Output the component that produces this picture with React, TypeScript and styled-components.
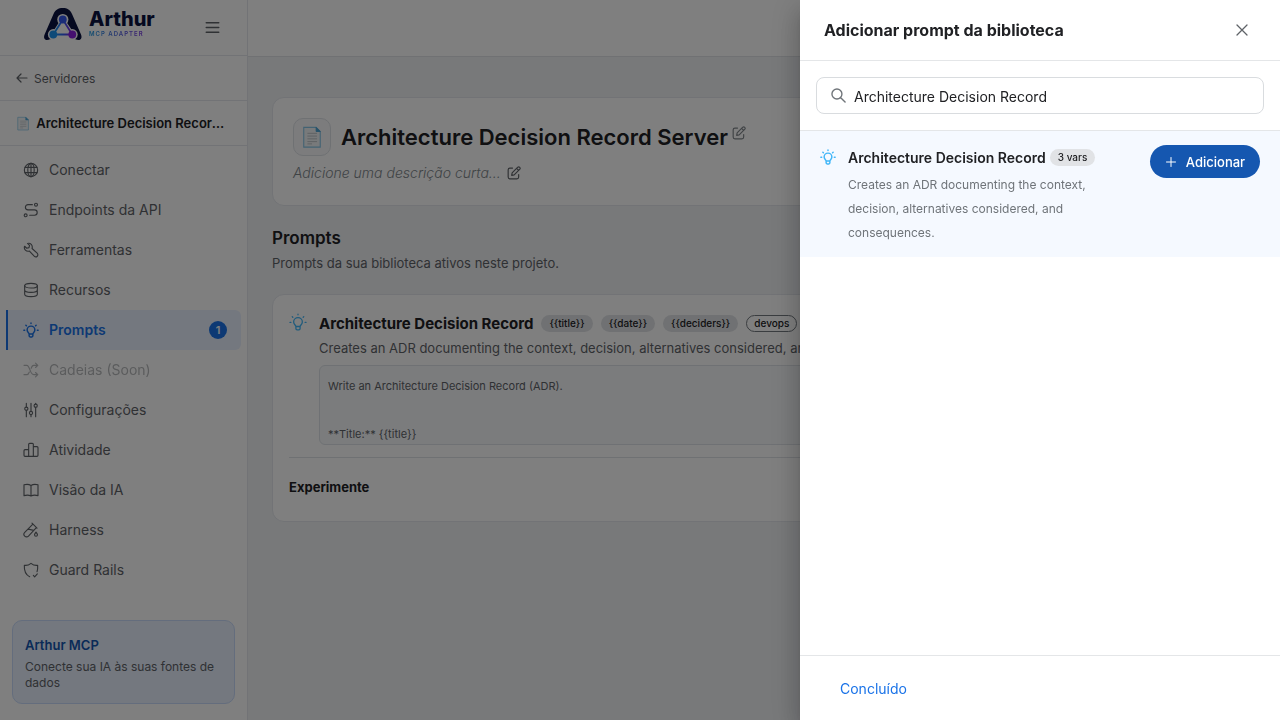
import React from 'react';
import styled, { createGlobalStyle, css } from 'styled-components';

const GlobalStyle = createGlobalStyle`
  *, *::before, *::after { box-sizing: border-box; }
  body {
    margin: 0;
    font-family: Inter, 'Liberation Sans', sans-serif;
    color: #202124;
    background: #f0f2f5;
  }
  h1, h2, h3, p, ul { margin: 0; padding: 0; }
  button, input { font-family: inherit; }
`;

/* ---------- icons ---------- */

const Stroke = styled.svg<{ $size?: number; $weight?: number }>`
  width: ${p => p.$size ?? 16}px;
  height: ${p => p.$size ?? 16}px;
  flex: none;
  fill: none;
  stroke: currentColor;
  stroke-width: ${p => p.$weight ?? 1.7};
  stroke-linecap: round;
  stroke-linejoin: round;
`;

type IconProps = { size?: number; weight?: number };

const makeIcon = (shape: React.ReactNode) => ({ size, weight }: IconProps) => (
  <Stroke viewBox="0 0 24 24" $size={size} $weight={weight} aria-hidden="true">{shape}</Stroke>
);

const GlobeIcon = makeIcon(<>
  <circle cx="12" cy="12" r="10" />
  <ellipse cx="12" cy="12" rx="4.8" ry="10" />
  <path d="M12 2v20M3 8h18M3 16h18" />
</>);
const RouteIcon = makeIcon(<>
  <circle cx="19.500" cy="4" r="2.200" />
  <circle cx="4" cy="20" r="2.200" />
  <path d="M14 4H7.500a3.900 3.900 0 0 0 0 7.800h9.800a4 4 0 0 1 0 8H10" />
</>);
const WrenchIcon = makeIcon(
  <path d="M6.800 2.200 9.800 5.200 9 8.400 5.600 9.400 2.400 6.400C.8 10.800 4.800 15 9.600 13.600l7.200 7.600c1.400 1.400 3.400 1.400 4.600.2s1.200-3.200-.2-4.600L13.600 9.800C15 5 11.200.8 6.800 2.200z" />
);
const DatabaseIcon = makeIcon(<>
  <ellipse cx="12" cy="5.500" rx="9.500" ry="3.500" />
  <path d="M2.500 5.500v13c0 2 4.200 3.500 9.500 3.500s9.500-1.500 9.500-3.500v-13M2.500 12c0 2 4.200 3.500 9.500 3.500s9.500-1.500 9.500-3.500" />
</>);
const BulbIcon = makeIcon(<>
  <path d="M9.200 18c0-1.600-3-2.800-3-6a5.800 5.800 0 0 1 11.600 0c0 3.200-3 4.400-3 6zM9.200 18v2.800c0 .9.700 1.600 1.600 1.600h2.400c.9 0 1.600-.7 1.600-1.600V18" />
  <path d="M12 1.500v.9M1.300 12.500h1.200M21.500 12.500h1.200M4.300 4.800l.8.800M19.700 4.800l-.8.800" />
</>);
const ShuffleIcon = makeIcon(
  <path d="M1.500 5h4.300c4.700 0 4.400 14 10.200 14h6M1.500 19h4.300c1.800 0 2.900-1.800 3.700-4M12.200 9.500C13 7 14 5 16 5h6M18.800 1.800 22.200 5l-3.400 3.200M18.800 15.800l3.400 3.200-3.400 3.200" />
);
const SlidersIcon = makeIcon(<>
  <path d="M5 2v5.500M5 12.500V22M12 2v12M12 19v3M19 2v1M19 8v14" />
  <circle cx="5" cy="10" r="2.400" /><circle cx="12" cy="16.500" r="2.400" /><circle cx="19" cy="5.500" r="2.400" />
</>);
const ChartIcon = makeIcon(
  <path d="M8.500 21.500V3.500a1.500 1.500 0 0 1 1.500-1.500h4a1.500 1.500 0 0 1 1.500 1.500v18M8.500 11.500H3A1.500 1.500 0 0 0 1.500 13v7A1.500 1.500 0 0 0 3 21.500h18a1.500 1.500 0 0 0 1.500-1.500V8.500A1.500 1.500 0 0 0 21 7h-5.500" />
);
const BookIcon = makeIcon(
  <path d="M12 5.200C9 3.200 5 3.200 1.500 4.200V20.500c3.500-1 7.500-1 10.500.5 3-1.500 7-1.500 10.500-.5V4.200C19 3.200 15 3.200 12 5.200zM12 5.200V21" />
);
const TubeIcon = makeIcon(<>
  <path d="M13.500 1.800 21 9.200M14.800 3.200 2.600 15.600a3.900 3.900 0 0 0 5.600 5.600L20 8.500M7.600 10.700l8.600 1.800" />
  <path d="M19.500 15.200c-1.400 1.800-2.200 2.900-2.200 4a2.200 2.200 0 0 0 4.400 0c0-1.100-.8-2.200-2.200-4z" />
</>);
const ShieldIcon = makeIcon(
  <path d="M10 22C4 19.500 1.500 15 2 5c4 .6 7-.5 10-3 3 2.500 6 3.600 10 3 .2 4 0 7-.9 9.500M15.500 20l2 2.200 4-4.400" />
);
const BackIcon = makeIcon(<path d="M22 12H3M10 4l-8 8 8 8" />);
const MenuIcon = makeIcon(<path d="M2 4.500h20M2 12h20M2 19.500h20" />);
const EditIcon = makeIcon(
  <path d="M9.500 3.500H5a3 3 0 0 0-3 3V19a3 3 0 0 0 3 3h12a3 3 0 0 0 3-3v-4.500M8 16l.8-4.300L18.500 2a2.500 2.500 0 0 1 3.500 3.500L12.300 15.200zM16.500 4l3.500 3.500" />
);
const SearchIcon = makeIcon(<><circle cx="9.500" cy="9.500" r="8" /><path d="m15.500 15.500 7 7" /></>);
const CloseIcon = makeIcon(<path d="M2 2l20 20M22 2 2 22" />);
const PlusIcon = makeIcon(<path d="M12 3v18M3 12h18" />);

const DocumentIcon = ({ size }: { size: number }) => (
  <svg width={size} height={size} viewBox="0 0 24 24" aria-hidden="true">
    <path d="M3 1.500h13.500L21 6v17H3z" fill="#f1f4f6" stroke="#86c5e6" strokeWidth="1.200" />
    <path d="M16.500 1.500V6H21z" fill="#4aa3d4" stroke="#4aa3d4" strokeWidth="1" />
    <path d="M7 8h10.500M7 11h10.500M7 14h10.500M7 17h10.500M7 19.500h5" stroke="#b9c0c5" strokeWidth="1" />
  </svg>
);

/* ---------- sidebar ---------- */

const Shell = styled.div`
  display: flex;
  height: 100vh;
  overflow: hidden;
`;

const Sidebar = styled.aside`
  display: flex;
  flex-direction: column;
  flex: none;
  width: 248px;
  background: #fff;
  border-right: 1px solid #e4e7ec;
`;

const Brand = styled.div`
  display: flex;
  align-items: center;
  height: 56px;
  padding: 0 27px 0 43px;
  border-bottom: 1px solid #e4e7ec;
`;

const Logo = styled.a`
  display: flex;
  gap: 6px;
  height: 34px;
  margin-bottom: 8px;
  color: #0b1340;
  text-decoration: none;
`;

const Wordmark = styled.span`
  display: flex;
  flex-direction: column;
  padding-top: 1px;
  font-size: 20px;
  font-weight: 800;
  line-height: 22px;
`;

const Tagline = styled.span`
  width: max-content;
  font-size: 6px;
  font-weight: 600;
  line-height: 8px;
  letter-spacing: 1px;
  background: linear-gradient(90deg, #1a9ae0, #7a35e0);
  background-clip: text;
  color: transparent;
`;

const IconButton = styled.button`
  display: grid;
  place-items: center;
  padding: 0;
  border: 0;
  background: none;
  color: #5f6368;
  cursor: pointer;
`;

const MenuButton = styled(IconButton)`
  margin-left: auto;
`;

const SideRow = styled.div`
  display: flex;
  align-items: center;
  gap: 6px;
  height: 45px;
  padding: 0 20px 0 16px;
  border-bottom: 1px solid #e4e7ec;
`;

const BackLink = styled.a`
  display: flex;
  align-items: center;
  gap: 6px;
  color: #5f6368;
  font-size: 12px;
  text-decoration: none;
`;

const ProjectName = styled.strong`
  overflow: hidden;
  font-size: 13px;
  font-weight: 600;
  text-overflow: ellipsis;
  white-space: nowrap;
`;

const Nav = styled.nav`
  display: flex;
  flex-direction: column;
  flex: 1;
  padding: 4px 6px;
`;

const NavItem = styled.a<{ $active?: boolean; $disabled?: boolean }>`
  display: flex;
  align-items: center;
  gap: 10px;
  height: 40px;
  padding: 0 14px 1px 15px;
  border-left: 2px solid transparent;
  color: #5f6368;
  font-size: 14px;
  text-decoration: none;
  ${p => p.$active && css`
    border-left-color: #1a73e8;
    border-radius: 0 6px 6px 0;
    background: #e8f0fe;
    color: #1a73e8;
    font-weight: 600;
  `}
  ${p => p.$disabled && css`opacity: 0.45;`}
`;

const Count = styled.span`
  display: grid;
  place-items: center;
  width: 18px;
  height: 18px;
  margin-left: auto;
  border-radius: 50%;
  background: #1a73e8;
  color: #fff;
  font-size: 11px;
  font-weight: 600;
`;

const Promo = styled.section`
  margin: 0 12px 16px;
  padding: 15px 12px 12px;
  border: 1px solid #c9dbfa;
  border-radius: 10px;
  background: #e8f0fe;
`;

const PromoTitle = styled.h3`
  margin-bottom: 5px;
  color: #1557b0;
  font-size: 13px;
  font-weight: 600;
  line-height: 18px;
`;

const PromoText = styled.p`
  color: #5f6368;
  font-size: 12px;
  line-height: 16px;
`;

/* ---------- page ---------- */

const Page = styled.div`
  flex: 1;
  min-width: 0;
`;

const TopBar = styled.header`
  height: 57px;
  border-bottom: 1px solid #e0e3e7;
  background: #fff;
`;

const Content = styled.main`
  padding: 40px 24px;
`;

const Card = styled.section`
  border: 1px solid #e4e7ec;
  border-radius: 12px;
  background: #fff;
`;

const ServerCard = styled(Card)`
  padding: 20px;
`;

const TitleRow = styled.div`
  display: flex;
  align-items: center;
  gap: 10px;
`;

const DocTile = styled.span`
  display: grid;
  place-items: center;
  width: 38px;
  height: 38px;
  border: 1px solid #dfe2e7;
  border-radius: 10px;
  background: #f8f9fa;
`;

const PageTitle = styled.h1`
  font-size: 22px;
  font-weight: 600;
  line-height: 30px;
  white-space: nowrap;
`;

const TitleGroup = styled.div`
  display: flex;
  gap: 4px;
  align-items: flex-start;
`;

const EditTitle = styled(IconButton)`
  padding-top: 4px;
  color: #80868b;
`;

const Summary = styled.p`
  display: flex;
  align-items: center;
  gap: 6px;
  margin-top: 5px;
  color: #80868b;
  font-size: 14px;
  font-style: italic;
  font-weight: 300;
  line-height: 24px;
`;

const SectionTitle = styled.h2`
  margin-top: 20px;
  font-size: 17px;
  font-weight: 600;
  line-height: 24px;
`;

const SectionNote = styled.p`
  margin: 3px 0 21px;
  color: #5f6368;
  font-size: 13px;
  line-height: 20px;
`;

const PromptCard = styled(Card)`
  padding: 16px;
`;

const PromptTop = styled.div`
  display: flex;
  gap: 12px;
  padding-bottom: 12px;
  border-bottom: 1px solid #dfe2e7;
`;

const BulbMark = styled.span<{ $top: number }>`
  display: flex;
  padding-top: ${p => p.$top}px;
  color: #40b6f8;
`;

const PromptBody = styled.div`
  flex: 1;
  min-width: 0;
`;

const PromptHead = styled.div`
  display: flex;
  align-items: center;
  gap: 8px;
  height: 24px;
`;

const PromptName = styled.h3`
  font-size: 15px;
  font-weight: 700;
  white-space: nowrap;
`;

const Chip = styled.span<{ $outlined?: boolean }>`
  height: 17px;
  padding: 0 8px;
  border-radius: 9px;
  background: #e1e3e6;
  font-size: 10px;
  font-weight: 500;
  line-height: 17px;
  white-space: nowrap;
  ${p => p.$outlined && css`
    padding: 0 7px;
    border: 1px solid #747a80;
    background: none;
    line-height: 15px;
  `}
`;

const PromptNote = styled.p`
  overflow: hidden;
  color: #5f6368;
  font-size: 13px;
  line-height: 26px;
  white-space: nowrap;
`;

const Preview = styled.pre`
  height: 80px;
  margin: 4px 0 0;
  padding: 8px;
  overflow: hidden;
  border: 1px solid #dfe3e8;
  border-radius: 6px;
  background: #f6f8fb;
  color: #5f6368;
  font-family: inherit;
  font-size: 11px;
  line-height: 24px;
`;

const TryTitle = styled.h3`
  padding: 20px 0 9px;
  font-size: 13px;
  font-weight: 700;
  line-height: 18px;
`;

/* ---------- drawer ---------- */

const Backdrop = styled.div`
  position: fixed;
  inset: 0;
  background: rgba(0, 0, 0, 0.5);
`;

const Drawer = styled.div`
  position: fixed;
  inset: 0 0 0 auto;
  display: flex;
  flex-direction: column;
  width: 480px;
  max-width: 100%;
  background: #fff;
  box-shadow: 0 8px 10px -5px rgba(0, 0, 0, 0.2), 0 16px 24px 2px rgba(0, 0, 0, 0.14),
    0 6px 30px 5px rgba(0, 0, 0, 0.12);
`;

const DrawerHead = styled.header`
  display: flex;
  align-items: center;
  justify-content: space-between;
  height: 61px;
  padding: 0 32px 0 24px;
  border-bottom: 1px solid #e4e6e8;
`;

const DrawerTitle = styled.h2`
  font-size: 16px;
  font-weight: 700;
`;

const SearchArea = styled.div`
  padding: 16px;
  border-bottom: 1px solid #e4e6e8;
`;

const SearchBox = styled.label`
  display: flex;
  align-items: center;
  gap: 8px;
  height: 37px;
  padding: 0 14px;
  border: 1px solid #d9dcdf;
  border-radius: 8px;
  color: #6f7479;
`;

const SearchInput = styled.input`
  flex: 1;
  min-width: 0;
  padding: 2px 0 0;
  border: 0;
  outline: 0;
  background: none;
  color: #202124;
  font-size: 14px;
`;

const Results = styled.ul`
  flex: 1;
  list-style: none;
`;

const Result = styled.li`
  display: flex;
  gap: 12px;
  padding: 12px 20px;
  background: #f5f9ff;
`;

const ResultBody = styled.div`
  width: 260px;
`;

const ResultHead = styled.div`
  display: flex;
  align-items: center;
  gap: 4px;
  height: 30px;
  padding-bottom: 2px;
`;

const ResultName = styled.h3`
  font-size: 14px;
  font-weight: 600;
  white-space: nowrap;
`;

const ResultNote = styled.p`
  color: #6f7479;
  font-size: 12px;
  line-height: 24px;
`;

const AddButton = styled.button`
  display: flex;
  align-items: center;
  justify-content: center;
  gap: 9px;
  width: 110px;
  height: 33px;
  margin: 2px 0 0 auto;
  padding: 0;
  border: 0;
  border-radius: 17px;
  background: #1557b0;
  color: #fff;
  font-size: 13px;
  font-weight: 500;
  cursor: pointer;
`;

const DrawerFoot = styled.footer`
  display: flex;
  align-items: center;
  height: 65px;
  padding: 0 24px;
  border-top: 1px solid #e4e6e8;
`;

const DoneButton = styled.button`
  padding: 8px 16px;
  border: 0;
  background: none;
  color: #1a73e8;
  font-size: 14px;
  font-weight: 400;
  cursor: pointer;
`;

const navItems: { label: string; Icon: React.FC<IconProps>; active?: boolean; disabled?: boolean; count?: number }[] = [
  { label: 'Conectar', Icon: GlobeIcon },
  { label: 'Endpoints da API', Icon: RouteIcon },
  { label: 'Ferramentas', Icon: WrenchIcon },
  { label: 'Recursos', Icon: DatabaseIcon },
  { label: 'Prompts', Icon: BulbIcon, active: true, count: 1 },
  { label: 'Cadeias (Soon)', Icon: ShuffleIcon, disabled: true },
  { label: 'Configurações', Icon: SlidersIcon },
  { label: 'Atividade', Icon: ChartIcon },
  { label: 'Visão da IA', Icon: BookIcon },
  { label: 'Harness', Icon: TubeIcon },
  { label: 'Guard Rails', Icon: ShieldIcon },
];

const LogoMark = () => (
  <svg width="40" height="34" viewBox="0 0 40 34" aria-hidden="true">
    <defs>
      <linearGradient id="mark" x1="0" y1="0" x2="1" y2="0">
        <stop offset="0" stopColor="#16a0f0" />
        <stop offset="0.5" stopColor="#2f62f0" />
        <stop offset="1" stopColor="#8a1fe0" />
      </linearGradient>
    </defs>
    <path d="M19.800 1c-4.500 0-7.500 1.800-9.300 6L1.800 27C.2 30.600 1.400 33 4 33c2.400 0 3.500-1.200 6-1.200h19.600c2.500 0 3.600 1.200 6 1.200 2.600 0 3.800-2.400 2.200-6L29 7c-1.800-4.200-4.700-6-9.200-6z" fill="#0b1340" />
    <path d="M19.800 13 10.500 27.500h19z" fill="#fff" stroke="#fff" strokeWidth="4" strokeLinejoin="round" />
    <path d="M10 27h20v7H10z" fill="#fff" />
    <circle cx="19.800" cy="12.500" r="5.600" fill="#fff" />
    <circle cx="10.300" cy="27.500" r="5.400" fill="#fff" />
    <circle cx="29.300" cy="27.500" r="5.400" fill="#fff" />
    <path d="M19.800 12.500 10.300 27.500h19z" fill="none" stroke="url(#mark)" strokeWidth="1.800" />
    <circle cx="19.800" cy="12.500" r="3.900" fill="#3558f0" />
    <circle cx="10.300" cy="27.500" r="3.900" fill="#1c94f0" />
    <circle cx="29.300" cy="27.500" r="3.900" fill="#8a1fe0" />
  </svg>
);

export default function App() {
  return (
    <>
      <GlobalStyle />
      <Shell>
        <Sidebar>
          <Brand>
            <Logo href="#">
              <LogoMark />
              <Wordmark>Arthur<Tagline>MCP ADAPTER</Tagline></Wordmark>
            </Logo>
            <MenuButton aria-label="Menu"><MenuIcon size={15} weight={2.4} /></MenuButton>
          </Brand>
          <SideRow>
            <BackLink href="#"><BackIcon size={12} weight={2.4} />Servidores</BackLink>
          </SideRow>
          <SideRow>
            <DocumentIcon size={17} />
            <ProjectName>Architecture Decision Record Server</ProjectName>
          </SideRow>
          <Nav>
            {navItems.map(({ label, Icon, active, disabled, count }) => (
              <NavItem key={label} href="#" $active={active} $disabled={disabled}>
                <Icon weight={active ? 2.2 : undefined} />
                {label}
                {count && <Count>{count}</Count>}
              </NavItem>
            ))}
          </Nav>
          <Promo>
            <PromoTitle>Arthur MCP</PromoTitle>
            <PromoText>Conecte sua IA às suas fontes de dados</PromoText>
          </Promo>
        </Sidebar>
        <Page>
          <TopBar />
          <Content>
            <ServerCard>
              <TitleRow>
                <DocTile><DocumentIcon size={22} /></DocTile>
                <TitleGroup>
                  <PageTitle>Architecture Decision Record Server</PageTitle>
                  <EditTitle aria-label="Editar nome"><EditIcon size={14} weight={2} /></EditTitle>
                </TitleGroup>
              </TitleRow>
              <Summary>
                Adicione uma descrição curta...
                <IconButton aria-label="Editar descrição"><EditIcon size={14} weight={2} /></IconButton>
              </Summary>
            </ServerCard>
            <SectionTitle>Prompts</SectionTitle>
            <SectionNote>Prompts da sua biblioteca ativos neste projeto.</SectionNote>
            <PromptCard>
              <PromptTop>
                <BulbMark $top={2}><BulbIcon size={18} weight={1.7} /></BulbMark>
                <PromptBody>
                  <PromptHead>
                    <PromptName>Architecture Decision Record</PromptName>
                    <Chip>{'{{title}}'}</Chip>
                    <Chip>{'{{date}}'}</Chip>
                    <Chip>{'{{deciders}}'}</Chip>
                    <Chip $outlined>devops</Chip>
                  </PromptHead>
                  <PromptNote>
                    Creates an ADR documenting the context, decision, alternatives considered, and consequences.
                  </PromptNote>
                  <Preview>{'Write an Architecture Decision Record (ADR).\n\n**Title:** {{title}}'}</Preview>
                </PromptBody>
              </PromptTop>
              <TryTitle>Experimente</TryTitle>
            </PromptCard>
          </Content>
        </Page>
      </Shell>
      <Backdrop />
      <Drawer role="dialog" aria-labelledby="drawer-title">
        <DrawerHead>
          <DrawerTitle id="drawer-title">Adicionar prompt da biblioteca</DrawerTitle>
          <IconButton aria-label="Fechar"><CloseIcon size={12} weight={2.6} /></IconButton>
        </DrawerHead>
        <SearchArea>
          <SearchBox>
            <SearchIcon size={15} weight={2.2} />
            <SearchInput aria-label="Buscar prompts" defaultValue="Architecture Decision Record" />
          </SearchBox>
        </SearchArea>
        <Results>
          <Result>
            <BulbMark $top={6}><BulbIcon weight={2.2} /></BulbMark>
            <ResultBody>
              <ResultHead>
                <ResultName>Architecture Decision Record</ResultName>
                <Chip>3 vars</Chip>
              </ResultHead>
              <ResultNote>
                Creates an ADR documenting the context, decision, alternatives considered, and consequences.
              </ResultNote>
            </ResultBody>
            <AddButton><PlusIcon size={12} weight={2} />Adicionar</AddButton>
          </Result>
        </Results>
        <DrawerFoot>
          <DoneButton>Concluído</DoneButton>
        </DrawerFoot>
      </Drawer>
    </>
  );
}
